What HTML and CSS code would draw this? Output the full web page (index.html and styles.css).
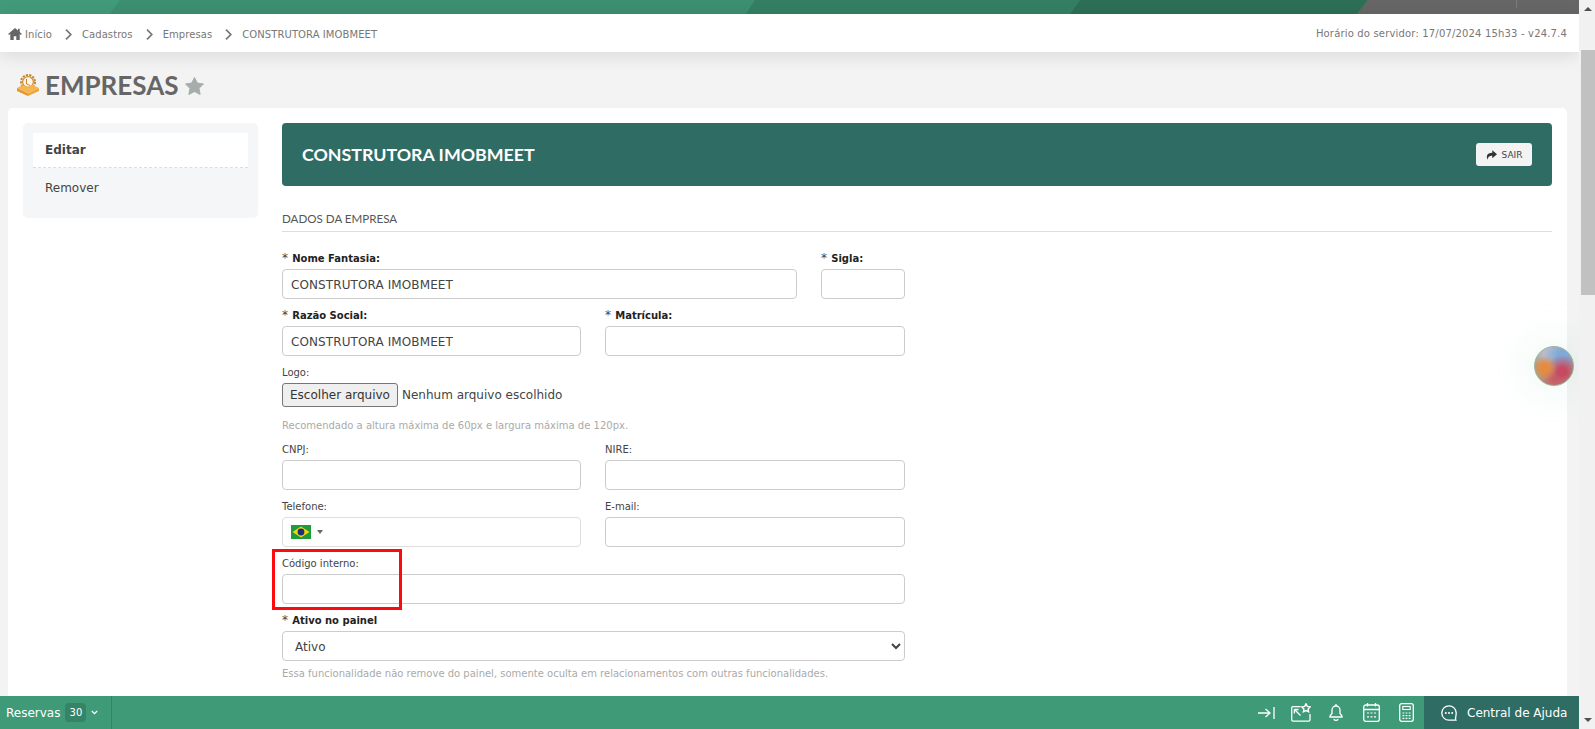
FILE: index.html
```html
<!DOCTYPE html>
<html lang="pt-BR">
<head>
<meta charset="utf-8">
<title>Empresas</title>
<link rel="stylesheet" href="styles.css">
</head>
<body>
<div class="topbar">
  <svg class="topshapes" viewBox="0 0 1595 14" preserveAspectRatio="none" aria-hidden="true">
    <rect width="1595" height="14" fill="#3c8f6f"/>
    <polygon points="0,0 120,0 110,14 0,14" fill="#419a78"/>
    <polygon points="755,0 1080,0 1070,14 746,14" fill="#347f62"/>
    <polygon points="1080,0 1368,0 1357,14 1070,14" fill="#2d6f55"/>
    <polygon points="1368,0 1595,0 1595,14 1357,14" fill="#666666"/>
    <rect x="1516" y="0" width="1" height="8" fill="#7c7c7c"/>
  </svg>
</div>
<header class="crumbbar">
  <nav class="crumbs">
    <svg class="home" viewBox="0 0 16 14"><path d="M8 0 L0 7 L1 8.2 L2.5 7 V14 H6.5 V9.5 H9.5 V14 H13.5 V7 L15 8.2 L16 7 L13.5 4.8 V1 H11.5 V3 Z" fill="#666"/></svg>
    <span>Início</span>
    <svg class="sep" viewBox="0 0 7 11"><path d="M1 .7 L5.8 5.5 L1 10.3" fill="none" stroke="#777" stroke-width="1.7"/></svg>
    <span>Cadastros</span>
    <svg class="sep" viewBox="0 0 7 11"><path d="M1 .7 L5.8 5.5 L1 10.3" fill="none" stroke="#777" stroke-width="1.7"/></svg>
    <span>Empresas</span>
    <svg class="sep" viewBox="0 0 7 11"><path d="M1 .7 L5.8 5.5 L1 10.3" fill="none" stroke="#777" stroke-width="1.7"/></svg>
    <span>CONSTRUTORA IMOBMEET</span>
  </nav>
  <div class="server">Horário do servidor: 17/07/2024 15h33 - v24.7.4</div>
</header>
<div class="pagehead">
  <svg class="pageicon" viewBox="0 0 22 22" aria-hidden="true">
    <circle cx="11" cy="8" r="7" fill="none" stroke="#c98431" stroke-width="2" stroke-dasharray="2.2 1.2"/>
    <circle cx="11" cy="8" r="5.4" fill="#fff6e8" stroke="#d48f38" stroke-width="1.3"/>
    <path d="M9.5 5 V10 L13 11.5" fill="none" stroke="#c98431" stroke-width="1"/>
    <path d="M0 14 L6 11 L11 13.5 L16 11 L22 14 L11 19.5 Z" fill="#f5b64e"/>
    <path d="M0 14 L11 19.5 V22 L0 17 Z" fill="#e3952c"/>
    <path d="M22 14 L11 19.5 V22 L22 17 Z" fill="#eda53a"/>
  </svg>
  <h1>EMPRESAS</h1>
  <svg class="star" viewBox="0 0 20 19" aria-hidden="true"><path d="M10 0.5 L13 6.4 L19.5 7.3 L14.8 12 L16 18.5 L10 15.4 L4 18.5 L5.2 12 L0.5 7.3 L7 6.4 Z" fill="#a6adab" stroke="#a6adab" stroke-width="1" stroke-linejoin="round"/></svg>
</div>
<main class="card">
  <aside class="side">
    <a class="side-item active">Editar</a>
    <a class="side-item">Remover</a>
  </aside>
  <section class="content">
    <div class="banner">
      <h2>CONSTRUTORA IMOBMEET</h2>
      <button class="exit" type="button">
        <svg viewBox="0 0 14 12"><path d="M8 0 L14 5 L8 10 V7 C4.5 7 2.5 8 2.4 12 C0 8 .5 3.2 8 3 Z" fill="#333"/></svg>
        SAIR
      </button>
    </div>
    <div class="section-title">DADOS DA EMPRESA</div>
    <form class="form">
      <div class="row">
        <div class="field w515"><label><i>*</i> <b>Nome Fantasia:</b></label><input class="inp" value="CONSTRUTORA IMOBMEET"></div>
        <div class="field w84"><label><i>*</i> <b>Sigla:</b></label><input class="inp"></div>
      </div>
      <div class="row">
        <div class="field left"><label><i>*</i> <b>Razão Social:</b></label><input class="inp" value="CONSTRUTORA IMOBMEET"></div>
        <div class="field right"><label><i>*</i> <b>Matrícula:</b></label><input class="inp"></div>
      </div>
      <div class="logo">
        <label>Logo:</label>
        <div class="filerow"><button class="filebtn" type="button">Escolher arquivo</button><span>Nenhum arquivo escolhido</span></div>
        <p class="hint">Recomendado a altura máxima de 60px e largura máxima de 120px.</p>
      </div>
      <div class="row">
        <div class="field left"><label>CNPJ:</label><input class="inp"></div>
        <div class="field right"><label>NIRE:</label><input class="inp"></div>
      </div>
      <div class="row">
        <div class="field left"><label>Telefone:</label>
          <div class="inp phone">
            <svg class="flag" viewBox="0 0 20 14"><rect width="20" height="14" fill="#1f9a3c"/><polygon points="10,1.5 18.5,7 10,12.5 1.5,7" fill="#f5d60a"/><circle cx="10" cy="7" r="3.4" fill="#1c2f7c"/></svg>
            <span class="caret"></span>
          </div>
        </div>
        <div class="field right"><label>E-mail:</label><input class="inp"></div>
      </div>
      <div class="row">
        <div class="field wfull"><label>Código interno:</label><input class="inp"><span class="redbox"></span></div>
      </div>
      <div class="row">
        <div class="field wfull"><label><i>*</i> <b>Ativo no painel</b></label>
          <select class="sel"><option>Ativo</option></select>
          <p class="hint hint2">Essa funcionalidade não remove do painel, somente oculta em relacionamentos com outras funcionalidades.</p>
        </div>
      </div>
    </form>
  </section>
</main>
<div class="orb"></div>
<footer class="bottombar">
  <div class="reservas"><span>Reservas</span><span class="count">30</span>
    <svg class="chev" viewBox="0 0 6 4"><path d="M.7 .7 L3 3 L5.3 .7" fill="none" stroke="#fff" stroke-width="1.1"/></svg>
  </div>
  <div class="tools">
    <svg class="tool t-arrow" viewBox="0 0 17 12"><path d="M0 6 H11.5 M7.5 2 L12 6 L7.5 10 M16 0 V12" fill="none" stroke="#fff" stroke-width="1.3"/></svg>
    <svg class="tool t-env" viewBox="0 0 20 19"><path d="M9.5 3.7 H2 A1.3 1.3 0 0 0 .7 5 V16.8 A1.3 1.3 0 0 0 2 18.1 H17.7 A1.3 1.3 0 0 0 19 16.8 V11 M3.5 6.5 L9.5 12.5 M3.3 6.5 H7.5 M3.3 6.5 V10.5" fill="none" stroke="#fff" stroke-width="1.3"/><path d="M15 .8 L16.3 3.4 L19.2 3.9 L17.1 6 L17.6 8.8 L15 7.5 L12.4 8.8 L12.9 6 L10.8 3.9 L13.7 3.4 Z" fill="none" stroke="#fff" stroke-width="1.4"/></svg>
    <svg class="tool t-bell" viewBox="0 0 14 17"><path d="M7 2 A4 4 0 0 0 3 6 V9.5 L1 12 V13 H13 V12 L11 9.5 V6 A4 4 0 0 0 7 2 Z M4.8 15 A2.4 2.4 0 0 0 9.2 15" fill="none" stroke="#fff" stroke-width="1.3"/><path d="M7 0 V2" stroke="#fff" stroke-width="1.3"/></svg>
    <svg class="tool t-cal" viewBox="0 0 17 19"><rect x=".7" y="2" width="15.6" height="16.3" rx="2" fill="none" stroke="#fff" stroke-width="1.3"/><path d="M.7 6.5 H16.3 M4.5 0 V3.5 M12.5 0 V3.5" fill="none" stroke="#fff" stroke-width="1.3"/><path d="M4 10 H6 M7.5 10 H9.5 M11 10 H13 M4 13.8 H6 M7.5 13.8 H9.5 M11 13.8 H13" stroke="#fff" stroke-width="1.2"/></svg>
    <svg class="tool t-calc" viewBox="0 0 15 19"><rect x=".7" y=".7" width="13.6" height="17.6" rx="2" fill="none" stroke="#fff" stroke-width="1.3"/><rect x="3.8" y="3.5" width="7.4" height="3" fill="none" stroke="#fff" stroke-width="1.1"/><path d="M3.5 10 H5.3 M6.6 10 H8.4 M9.7 10 H11.5 M3.5 12.7 H5.3 M6.6 12.7 H8.4 M9.7 12.7 H11.5 M3.5 15.3 H5.3 M6.6 15.3 H8.4 M9.7 15.3 H11.5" stroke="#fff" stroke-width="1.2"/></svg>
  </div>
  <div class="help">
    <svg viewBox="0 0 16 16"><path d="M8 .8 A7.2 7.2 0 1 0 8 15.2 H14.8 C14 14 15.2 11 15.2 8 A7.2 7.2 0 0 0 8 .8 Z" fill="none" stroke="#fff" stroke-width="1.3"/><circle cx="4.8" cy="8" r="1" fill="#fff"/><circle cx="8" cy="8" r="1" fill="#fff"/><circle cx="11.2" cy="8" r="1" fill="#fff"/></svg>
    <span>Central de Ajuda</span>
  </div>
</footer>
<div class="scrollbar">
  <span class="arrow up"></span>
  <span class="thumb"></span>
  <span class="arrow down"></span>
</div>
</body>
</html>
```

FILE: styles.css
```css
* { box-sizing: border-box; }
html, body { margin: 0; padding: 0; height: 729px; overflow: hidden; }
body {
  background: #f3f3f3;
  font-family: "DejaVu Sans", sans-serif;
  color: #444;
  width: 1595px;
  position: relative;
}
.topbar { height: 14px; }
.topshapes { display: block; width: 1595px; height: 14px; }
.crumbbar {
  height: 38px;
  width: 1579px;
  background: #fff;
  display: flex;
  align-items: center;
  justify-content: space-between;
  padding: 0 12px 0 8px;
  font-size: 10px;
  color: #777;
  box-shadow: 0 4px 18px rgba(0,0,0,.1);
  position: relative;
}
.crumbs { display: flex; align-items: center; padding-top: 2px; letter-spacing: .08px; }
.home { width: 14px; height: 12px; margin-right: 3px; }
.sep { width: 7px; height: 11px; margin: 0 10px 0 13px; }
.server { font-size: 10px; color: #777; letter-spacing: .17px; }
.pagehead {
  height: 56px;
  width: 1579px;
  display: flex;
  align-items: center;
  padding: 10px 0 0 17px;
}
.pageicon { width: 22px; height: 22px; margin-right: 6px; }
.pagehead h1 {
  margin: 0;
  font-family: Lato, sans-serif;
  font-size: 26px;
  font-weight: 700;
  color: #666;
  line-height: 1;
}
.star { width: 19px; height: 18px; margin-left: 7px; margin-top: 2px; }
.card {
  width: 1559px;
  margin-left: 8px;
  height: 621px;
  background: #fff;
  border-radius: 5px 5px 0 0;
  display: flex;
  padding: 15px 15px 0 15px;
}
.side {
  width: 235px;
  height: 95px;
  background: #f5f6f8;
  border-radius: 5px;
  padding: 10px;
  flex: none;
  font-size: 12px;
}
.side-item { display: flex; align-items: center; height: 34px; padding-left: 12px; color: #444; }
.side-item.active {
  background: #fff;
  border-bottom: 1px dashed #ddd;
  font-weight: 700;
  height: 35px;
  margin-bottom: 3px;
}
.content { flex: 1; margin-left: 24px; min-width: 0; }
.banner {
  height: 63px;
  background: #2f6d64;
  border-radius: 4px;
  display: flex;
  align-items: center;
  justify-content: space-between;
  padding: 0 20px;
}
.banner h2 {
  margin: -2px 0 0;
  font-family: Lato, sans-serif;
  font-size: 17.8px;
  font-weight: 700;
  color: #fff;
}
.exit {
  width: 56px;
  height: 23px;
  border: 0;
  border-radius: 3px;
  background: #f3f3f3;
  color: #444;
  font-family: "DejaVu Sans", sans-serif;
  font-size: 9px;
  padding: 0;
  display: flex;
  align-items: center;
  justify-content: center;
  gap: 5px;
}
.exit svg { width: 11px; height: 10px; }
.section-title {
  margin-top: 26px;
  height: 20px;
  font-family: Lato, sans-serif;
  font-size: 11.6px;
  line-height: 13px;
  color: #555;
  border-bottom: 1px solid #ddd;
}
.form { width: 623px; padding-top: 20px; }
.row { display: flex; gap: 24px; height: 57px; }
.field { display: flex; flex-direction: column; position: relative; }
.field label, .logo label {
  font-size: 10px;
  color: #444;
  line-height: 13px;
  height: 17px;
  display: block;
  flex: none;
}
.field label b { color: #222; }
.field label i { font-style: normal; font-size: 12px; line-height: 10px; margin-right: 1px; }
.w515 { width: 515px; }
.w84 { width: 84px; }
.left { width: 299px; }
.right { width: 300px; }
.wfull { width: 623px; }
.inp {
  height: 30px;
  width: 100%;
  border: 1px solid #ccc;
  border-radius: 4px;
  padding: 2px 8px 0;
  font-family: "DejaVu Sans", sans-serif;
  font-size: 12px;
  letter-spacing: .1px;
  color: #444;
  background: #fff;
  outline: none;
  flex: none;
}
.logo { height: 77px; }
.filerow { display: flex; align-items: center; font-size: 12px; color: #444; height: 24px; }
.filebtn {
  width: 116px;
  height: 24px;
  background: #efefef;
  border: 1px solid #767676;
  border-radius: 3px;
  font-family: "DejaVu Sans", sans-serif;
  font-size: 12px;
  color: #333;
  padding: 0;
  margin-right: 4px;
}
.hint { margin: 12px 0 0; font-size: 10px; line-height: 13px; color: #aaa; }
.hint2 { margin-top: 6px; white-space: nowrap; flex: none; }
.phone { display: flex; align-items: center; border-color: #ddd; padding: 0 8px; }
.flag { width: 20px; height: 14px; }
.caret { width: 0; height: 0; margin-left: 6px; border: 3px solid transparent; border-top: 4px solid #666; border-bottom: 0; }
.sel {
  height: 30px;
  width: 100%;
  border: 1px solid #ccc;
  border-radius: 4px;
  background: #fff;
  padding: 2px 0 0 8px;
  font-family: "DejaVu Sans", sans-serif;
  font-size: 12px;
  color: #444;
  flex: none;
}
.redbox {
  position: absolute;
  left: -10px;
  top: -8px;
  width: 130px;
  height: 61px;
  border: 3px solid #fb0a0f;
  pointer-events: none;
}
.orb {
  position: absolute;
  left: 1534px;
  top: 346px;
  width: 40px;
  height: 40px;
  border-radius: 50%;
  border: 1px solid #9db89f;
  background:
    radial-gradient(circle at 25% 55%, #e88a3e 0 10%, rgba(232,138,62,0) 36%),
    radial-gradient(circle at 72% 65%, #c84a62 0 12%, rgba(200,74,98,0) 46%),
    radial-gradient(circle at 72% 25%, #7eaad8 0 12%, rgba(126,170,216,0) 48%),
    radial-gradient(circle at 38% 18%, #bcbccf 0 14%, rgba(188,188,207,0) 46%),
    radial-gradient(circle at 45% 92%, #c66c6c 0 8%, rgba(198,108,108,0) 35%),
    #a3a58c;
  box-shadow: 0 0 40px 10px rgba(150,210,180,.14);
}
.bottombar {
  position: absolute;
  left: 0;
  top: 696px;
  width: 1579px;
  height: 33px;
  background: #3f9a77;
  color: #fff;
  display: flex;
  align-items: center;
}
.reservas {
  width: 112px;
  height: 33px;
  border-right: 1px solid #368468;
  display: flex;
  align-items: center;
  padding-left: 6px;
  font-size: 12px;
}
.count {
  margin-left: 5px;
  width: 21px;
  height: 19px;
  border-radius: 4px;
  background: #368468;
  font-size: 10px;
  display: flex;
  align-items: center;
  justify-content: center;
}
.chev { width: 7px; height: 5px; margin-left: 5px; }
.tools { margin-left: auto; display: flex; align-items: center; padding-right: 10px; }
.tool { display: block; flex: none; }
.t-arrow { width: 17px; height: 12px; }
.t-env { width: 20px; height: 19px; margin-left: 16px; }
.t-bell { width: 14px; height: 17px; margin-left: 18px; }
.t-cal { width: 17px; height: 19px; margin-left: 20px; }
.t-calc { width: 15px; height: 19px; margin-left: 19px; }
.help {
  width: 155px;
  height: 33px;
  background: #2f6d64;
  display: flex;
  align-items: center;
  padding-left: 17px;
  gap: 10px;
  font-size: 12px;
  flex: none;
}
.help svg { width: 16px; height: 16px; }
.scrollbar {
  position: absolute;
  left: 1579px;
  top: 0;
  width: 16px;
  height: 729px;
  background: #f1f1f1;
}
.thumb { position: absolute; left: 2px; top: 50px; width: 14px; height: 245px; background: #c1c1c1; }
.arrow { position: absolute; left: 5px; width: 0; height: 0; border-left: 4px solid transparent; border-right: 4px solid transparent; }
.arrow.up { top: 7px; border-bottom: 4px solid #505050; }
.arrow.down { bottom: 7px; border-top: 4px solid #505050; }
```
